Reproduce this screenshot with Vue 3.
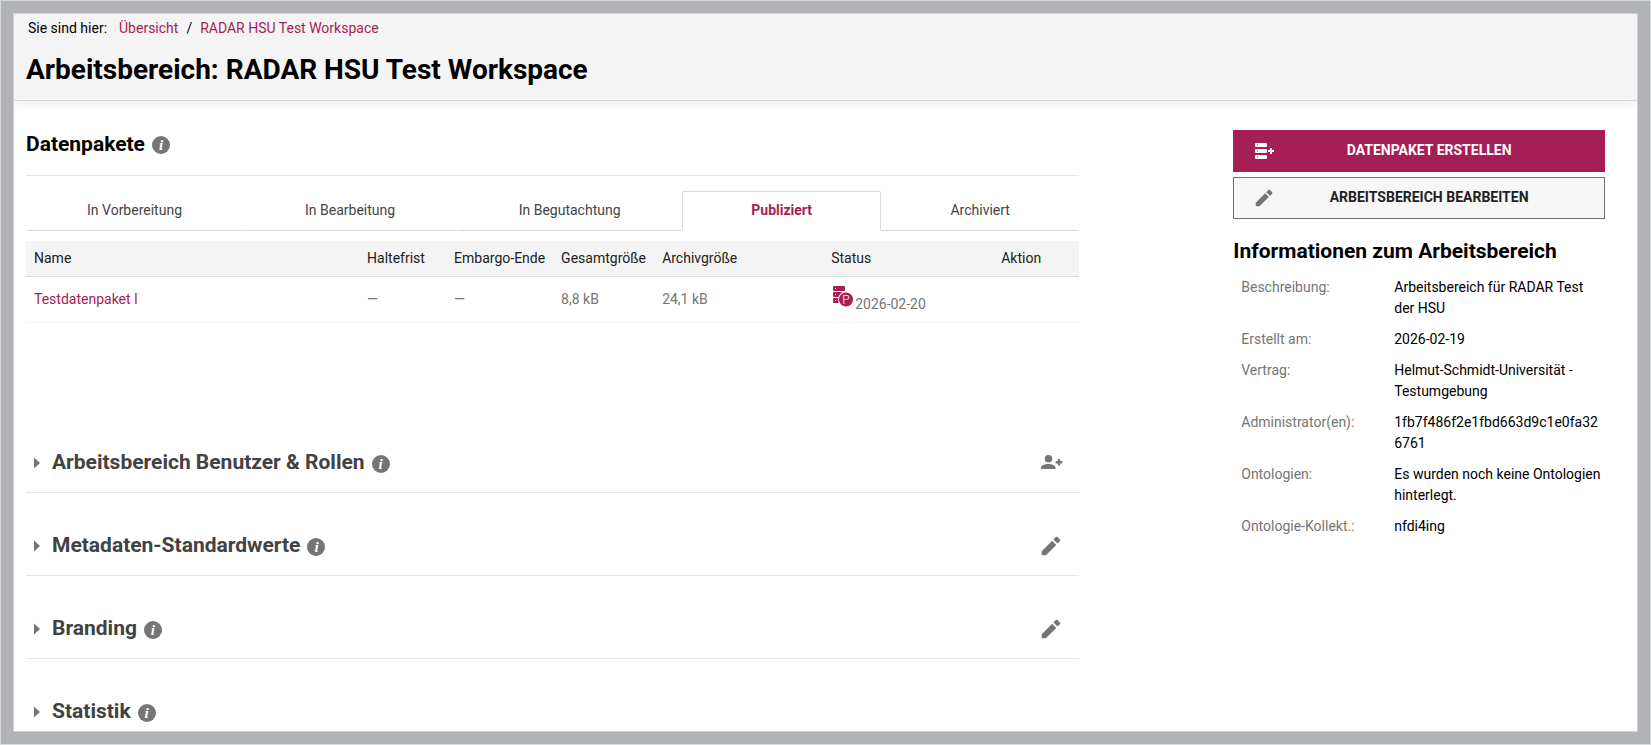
<template>
  <div class="frame">
    <div class="page">
      <header class="page-header">
        <nav class="breadcrumb" aria-label="Breadcrumb">
          <span class="breadcrumb-label">Sie sind hier:</span>
          <a href="#">Übersicht</a>
          <span>/</span>
          <a href="#">RADAR HSU Test Workspace</a>
        </nav>
        <h1>Arbeitsbereich: RADAR HSU Test Workspace</h1>
      </header>

      <div class="content">
        <main>
          <!-- Datenpakete -->
          <section class="packages">
            <div class="packages-title">
              <h2>Datenpakete</h2>
              <button type="button" class="info-button" aria-label="Info">i</button>
            </div>

            <div class="tabs" role="tablist">
              <button
                v-for="tab in tabs"
                :key="tab"
                type="button"
                role="tab"
                class="tab"
                :class="{ active: tab === activeTab }"
                :aria-selected="tab === activeTab"
                @click="activeTab = tab"
              >
                {{ tab }}
              </button>
            </div>

            <table class="package-table">
              <thead>
                <tr>
                  <th class="col-name">Name</th>
                  <th class="col-hold">Haltefrist</th>
                  <th class="col-embargo">Embargo-Ende</th>
                  <th class="col-size">Gesamtgröße</th>
                  <th class="col-archive">Archivgröße</th>
                  <th class="col-status">Status</th>
                  <th class="col-action">Aktion</th>
                </tr>
              </thead>
              <tbody>
                <tr v-for="item in packages" :key="item.name">
                  <td><a href="#">{{ item.name }}</a></td>
                  <td>{{ item.hold }}</td>
                  <td>{{ item.embargo }}</td>
                  <td>{{ item.size }}</td>
                  <td>{{ item.archive }}</td>
                  <td>
                    <div class="status">
                      <svg class="status-icon" viewBox="0 0 20 21" aria-hidden="true">
                        <rect x="0" y="0" width="12" height="5" rx="1" />
                        <rect x="0" y="6" width="12" height="5" rx="1" />
                        <rect x="0" y="12" width="12" height="5" rx="1" />
                        <g class="status-hole">
                          <rect x="2" y="2" width="1" height="1" />
                          <rect x="2" y="8" width="1" height="1" />
                          <rect x="2" y="14" width="1" height="1" />
                        </g>
                        <circle class="status-hole" cx="13" cy="13.5" r="8" />
                        <circle cx="13" cy="13.5" r="7" />
                        <text x="13" y="18" text-anchor="middle">P</text>
                      </svg>
                      <span>{{ item.date }}</span>
                    </div>
                  </td>
                  <td></td>
                </tr>
              </tbody>
            </table>
          </section>

          <!-- Eingeklappte Bereiche -->
          <section v-for="panel in panels" :key="panel.title" class="panel">
            <button type="button" class="panel-toggle" aria-expanded="false" :aria-label="panel.title">
              <svg viewBox="0 0 6 12"><path d="M0 0.5L6 6L0 11.5z" /></svg>
            </button>
            <h2>{{ panel.title }}</h2>
            <button type="button" class="info-button" aria-label="Info">i</button>
            <button v-if="panel.icon" type="button" class="panel-action" :aria-label="panel.action">
              <svg v-if="panel.icon === 'user'" viewBox="0 0 24 24">
                <path d="M9.500 4a3.800 3.800 0 1 1 0 7.600a3.800 3.800 0 0 1 0-7.600zM2 18v-1.300c0-2.300 3.800-3.600 7.300-3.600s7.200 1.300 7.200 3.600V18zM18.800 8h2.400v2.100h2.100v2.400h-2.100v2.100h-2.400v-2.100h-2.100v-2.400h2.100z" />
              </svg>
              <svg v-else viewBox="0 0 24 24"><path :d="pencil" /></svg>
            </button>
          </section>
        </main>

        <aside>
          <div class="actions">
            <button type="button" class="action-button primary">
              <svg viewBox="0 0 20 18" aria-hidden="true">
                <path
                  fill-rule="evenodd"
                  d="M1 1h10a1 1 0 0 1 1 1v2a1 1 0 0 1-1 1H1a1 1 0 0 1-1-1V2a1 1 0 0 1 1-1zM2 2.500v1h1v-1zM1 7h10a1 1 0 0 1 1 1v2a1 1 0 0 1-1 1H1a1 1 0 0 1-1-1V8a1 1 0 0 1 1-1zM2 8.500v1h1v-1zM1 13h10a1 1 0 0 1 1 1v2a1 1 0 0 1-1 1H1a1 1 0 0 1-1-1v-2a1 1 0 0 1 1-1zM2 14.500v1h1v-1zM15 6h2v2h2v2h-2v2h-2v-2h-2v-2h2z"
                />
              </svg>
              <span>Datenpaket erstellen</span>
            </button>
            <button type="button" class="action-button">
              <svg viewBox="2 2 22 20" aria-hidden="true"><path :d="pencil" /></svg>
              <span>Arbeitsbereich bearbeiten</span>
            </button>
          </div>

          <h2>Informationen zum Arbeitsbereich</h2>
          <dl class="details">
            <div v-for="row in details" :key="row.label" class="detail-row">
              <dt>{{ row.label }}:</dt>
              <dd>{{ row.value }}</dd>
            </div>
          </dl>
        </aside>
      </div>
    </div>
  </div>
</template>

<script setup>
import { ref } from 'vue';

const tabs = ['In Vorbereitung', 'In Bearbeitung', 'In Begutachtung', 'Publiziert', 'Archiviert'];
const activeTab = ref('Publiziert');

const packages = [
  {
    name: 'Testdatenpaket I',
    hold: '—',
    embargo: '—',
    size: '8,8 kB',
    archive: '24,1 kB',
    date: '2026-02-20'
  }
];

const panels = [
  { title: 'Arbeitsbereich Benutzer & Rollen', icon: 'user', action: 'Benutzer hinzufügen' },
  { title: 'Metadaten-Standardwerte', icon: 'pencil', action: 'Bearbeiten' },
  { title: 'Branding', icon: 'pencil', action: 'Bearbeiten' },
  { title: 'Statistik' }
];

const details = [
  { label: 'Beschreibung', value: 'Arbeitsbereich für RADAR Test der HSU' },
  { label: 'Erstellt am', value: '2026-02-19' },
  { label: 'Vertrag', value: 'Helmut-Schmidt-Universität - Testumgebung' },
  { label: 'Administrator(en)', value: '1fb7f486f2e1fbd663d9c1e0fa326761' },
  { label: 'Ontologien', value: 'Es wurden noch keine Ontologien hinterlegt.' },
  { label: 'Ontologie-Kollekt.', value: 'nfdi4ing' }
];

const pencil =
  'M2.700 17.200V21.300h4.100L17.300 10.900l-4.100-4.100zM20.900 7.300a1.300 1.300 0 0 0 0-1.800l-2.400-2.400a1.300 1.300 0 0 0-1.800 0l-2.300 2.400 4.100 4.100z';
</script>

<style>
body {
  margin: 0;
}
</style>

<style scoped>
.frame {
  box-sizing: border-box;
  height: 100vh;
  padding: 12px;
  border: 1px solid #d9dadb;
  background: #b2b3b6;
  font-family: Roboto, "Liberation Sans", sans-serif;
  font-size: 14px;
  line-height: 21px;
  color: #000;
}

.page {
  box-sizing: border-box;
  height: 100%;
  overflow: hidden;
  border: 1px solid #d0d1d3;
  background: #fff;
}

a {
  color: #a51e54;
  text-decoration: none;
}

button {
  margin: 0;
  padding: 0;
  border: none;
  background: none;
  font: inherit;
  cursor: pointer;
}

h1,
h2 {
  margin: 0;
  font-weight: 700;
}

h2 {
  font-size: 21px;
  line-height: 28px;
}

.page-header {
  padding: 4px 12px 12px;
  border-bottom: 1px solid #d8d8d8;
  background: #f4f4f4;
  box-shadow: 0 2px 8px rgba(0, 0, 0, 0.08);
}

.breadcrumb {
  display: flex;
  gap: 8px;
  padding-left: 2px;
}

.breadcrumb-label {
  margin-right: 4px;
}

.page-header h1 {
  margin-top: 13px;
  font-size: 28px;
  line-height: 36px;
}

.content {
  display: grid;
  grid-template-columns: minmax(0, 17fr) minmax(0, 6fr);
  column-gap: 154px;
  padding: 29px 32px 0 12px;
}

.info-button {
  width: 18px;
  height: 18px;
  margin-top: 2px;
  border-radius: 50%;
  background: #757575;
  color: #fff;
  font: italic bold 15px/18px "Liberation Serif", serif;
  text-align: center;
}

/* Datenpakete */
.packages {
  min-height: 303px;
}

.packages-title {
  display: flex;
  align-items: center;
  gap: 7px;
  padding-bottom: 17px;
  border-bottom: 1px solid #e5e5e5;
}

.tabs {
  display: grid;
  grid-template-columns: 217fr 214fr 225fr 199fr 198fr;
  margin-top: 15px;
}

.tab {
  height: 40px;
  padding-bottom: 2px;
  border: 1px solid transparent;
  border-bottom-color: #d8d8d8;
  color: #444;
}

.tab.active {
  border-color: #d8d8d8;
  border-bottom-color: transparent;
  border-radius: 2px 2px 0 0;
  color: #a51e54;
  font-weight: 700;
}

.package-table {
  width: 100%;
  margin-top: 10px;
  border-collapse: collapse;
  table-layout: fixed;
}

.package-table th {
  box-sizing: border-box;
  height: 35px;
  padding: 0 8px;
  border-bottom: 1px solid #d8d8d8;
  background: #f4f4f4;
  color: #212121;
  font-weight: 400;
  text-align: left;
  white-space: nowrap;
}

.package-table td {
  height: 45px;
  padding: 0 8px;
  border-bottom: 1px solid #f0f0f0;
  color: #757575;
}

.col-name { width: 333px; }
.col-hold { width: 87px; }
.col-embargo { width: 107px; }
.col-size { width: 101px; }
.col-archive { width: 169px; }
.col-status { width: 170px; }
.col-action { width: 86px; }

.status {
  display: flex;
  gap: 2px;
  padding: 2px 0 0 2px;
}

.status span {
  padding-top: 8px;
}

.status-icon {
  width: 20px;
  height: 21px;
  fill: #a51e54;
}

.status-hole {
  fill: #fff;
}

.status-icon text {
  fill: #fff;
  font-size: 12px;
  font-weight: 300;
}

/* Bereiche */
.panel {
  box-sizing: border-box;
  display: flex;
  align-items: center;
  height: 60px;
  margin-bottom: 23px;
  padding: 0 16px 0 8px;
  border-bottom: 1px solid #e5e5e5;
}

.panel h2 {
  margin: 0 7px 0 12px;
  padding-bottom: 2px;
  color: #424242;
}

.panel-toggle {
  display: flex;
  width: 6px;
  height: 12px;
}

.panel-toggle svg,
.panel-action svg {
  width: 100%;
  height: 100%;
  fill: #757575;
}

.panel-action {
  width: 24px;
  height: 24px;
  margin-left: auto;
}

/* Seitenleiste */
.actions {
  display: flex;
  flex-direction: column;
  gap: 5px;
}

.action-button {
  box-sizing: border-box;
  display: flex;
  align-items: center;
  height: 42px;
  padding: 0 21px;
  border: 1px solid #707070;
  background: #f7f7f7;
  color: #212121;
  font-weight: 700;
  text-transform: uppercase;
}

.action-button svg {
  width: 20px;
  height: 18px;
  fill: #757575;
}

.action-button span {
  flex: 1;
  padding-bottom: 2px;
}

.action-button.primary {
  border-color: #a51e54;
  background: #a51e54;
  color: #fff;
}

.action-button.primary svg {
  fill: #fff;
}

aside h2 {
  margin-top: 18px;
}

.details {
  margin: 7px 0 0;
}

.detail-row {
  display: grid;
  grid-template-columns: 145px minmax(0, 1fr);
  column-gap: 8px;
  padding: 5px 4px 5px 8px;
}

.detail-row dt {
  color: #757575;
}

.detail-row dd {
  margin: 0;
  overflow-wrap: anywhere;
}
</style>
